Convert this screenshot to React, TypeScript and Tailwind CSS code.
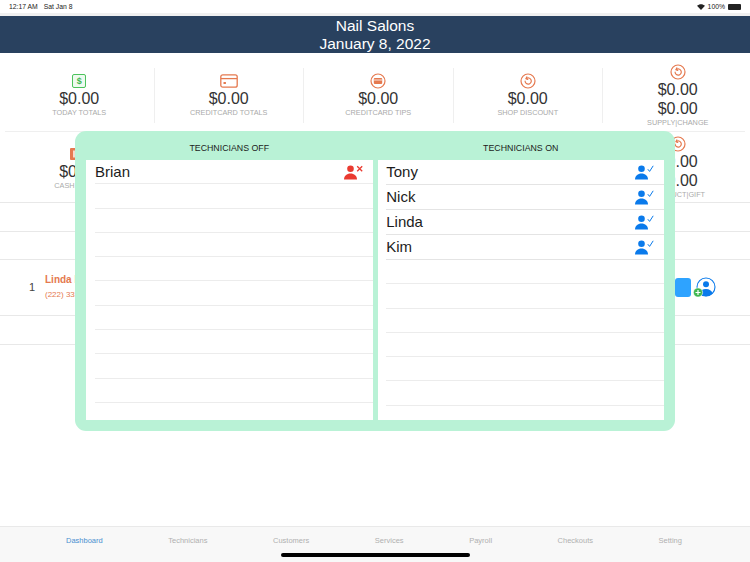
import React from "react";

const offRows = Array.from({ length: 10 });
const onRows = ["Tony", "Nick", "Linda", "Kim"];
const tabs = ["Dashboard", "Technicians", "Customers", "Services", "Payroll", "Checkouts", "Setting"];

function DollarIcon() {
  return (
    <div className="w-[14px] h-[14px] rounded-[2px] border-[1.5px] border-[#4cc35c] bg-[#eefaf0] flex items-center justify-center text-[9px] font-bold leading-none text-[#3fb650]">
      $
    </div>
  );
}

function CardIcon() {
  return (
    <svg width="18" height="14" viewBox="0 0 18 14" fill="none" stroke="#e5794f" strokeWidth="1.3">
      <rect x="0.8" y="0.8" width="16.4" height="12.4" rx="2" />
      <path d="M1 4.6h16" />
      <rect x="3.5" y="8" width="2.4" height="2" fill="#e5794f" stroke="none" />
    </svg>
  );
}

function CashIcon() {
  return (
    <svg width="18" height="12" viewBox="0 0 18 12">
      <rect width="18" height="12" rx="1" fill="#e5794f" />
      <rect x="3" y="2.500" width="12" height="7" fill="#f8d9cc" />
    </svg>
  );
}

function CardCircleIcon() {
  return (
    <svg width="16" height="16" viewBox="0 0 16 16" fill="none">
      <circle cx="8" cy="8" r="7" stroke="#e5794f" strokeWidth="1.2" />
      <rect x="3.8" y="5" width="8.4" height="6" rx="1" fill="#e5794f" />
      <path d="M3.8 7h8.4" stroke="#fff" strokeWidth="0.8" />
    </svg>
  );
}

function ReturnIcon() {
  return (
    <svg width="16" height="16" viewBox="0 0 16 16" fill="none" stroke="#e5794f" strokeWidth="1.2">
      <circle cx="8" cy="8" r="7" />
      <path d="M6.3 5.6a3.1 3.1 0 1 1-1.2 2.6" strokeLinecap="round" />
      <path d="M6.9 3.9 5.9 5.7l1.9.7" strokeLinecap="round" strokeLinejoin="round" />
    </svg>
  );
}

function PersonOn() {
  return (
    <svg width="19" height="15" viewBox="0 0 19 15" fill="none">
      <circle cx="6.500" cy="3.800" r="3.300" fill="#0a7aeb" />
      <path d="M0 14.600c0-3.600 2.800-6 6.500-6s6.500 2.400 6.500 6z" fill="#0a7aeb" />
      <path d="M12.800 4.200 14.600 6.400 18.200 0.800" stroke="#0a7aeb" strokeWidth="1" />
    </svg>
  );
}

function PersonOff() {
  return (
    <svg width="19" height="15" viewBox="0 0 19 15" fill="none">
      <circle cx="6.500" cy="3.800" r="3.300" fill="#ea3a30" />
      <path d="M0 14.600c0-3.600 2.800-6 6.500-6s6.500 2.400 6.500 6z" fill="#ea3a30" />
      <path d="M13.200 1.200l5 5M18.200 1.200l-5 5" stroke="#ea3a30" strokeWidth="1.300" />
    </svg>
  );
}

function AddUserIcon() {
  return (
    <svg width="23" height="21" viewBox="0 0 23 21" fill="none">
      <circle cx="13" cy="10" r="9" stroke="#0a7aeb" strokeWidth="1.100" />
      <circle cx="13" cy="7.200" r="3" fill="#0a7aeb" />
      <path d="M6.500 16.500c.6-3 3.200-4.600 6.500-4.600s5.900 1.600 6.500 4.600c-3.500 3.500-9.500 3.500-13 0z" fill="#0a7aeb" />
      <circle cx="5" cy="15.500" r="4.600" fill="#3fb650" stroke="#fff" strokeWidth="0.600" />
      <path d="M5 13v5M2.500 15.500h5" stroke="#fff" strokeWidth="1.200" />
    </svg>
  );
}

function Stat({ icon, values, label, last }: { icon: React.ReactNode; values: string[]; label: string; last?: boolean }) {
  return (
    <div className={`h-[55px] flex flex-col items-center justify-center ${last ? "" : "border-r border-[#efefef]"}`}>
      <div className="h-4 flex items-center justify-center">{icon}</div>
      {values.map((v, i) => (
        <div key={i} className="text-[16px] leading-[19px] text-[#333]">
          {v}
        </div>
      ))}
      <div className="text-[7.300px] leading-[10px] text-[#aaa] whitespace-nowrap">{label}</div>
    </div>
  );
}

export default function App() {
  return (
    <div
      className="relative w-[750px] h-[562px] overflow-hidden bg-white flex flex-col"
      style={{ fontFamily: '"Liberation Sans", Arial, sans-serif' }}
    >
      {/* Status bar */}
      <div className="h-[13px] flex items-center justify-between pl-[9px] pr-[9px] pt-[1px] text-[6.800px] font-medium text-[#222] shrink-0">
        <div className="flex gap-[6px]">
          <span>12:17 AM</span>
          <span>Sat Jan 8</span>
        </div>
        <div className="flex items-center gap-[3px]">
          <svg width="8" height="6" viewBox="0 0 8 6" fill="#222">
            <path d="M4 6 0 1.800C2.300-.4 5.700-.4 8 1.800z" />
          </svg>
          <span>100%</span>
          <div className="w-[13px] h-[6px] bg-[#222] rounded-[1px]" />
        </div>
      </div>
      <div className="h-[3px] bg-[#f0f0f0] shrink-0" />

      {/* Header */}
      <div className="h-[37px] bg-[#29415f] text-white text-center text-[15.500px] leading-[18px] pt-[1px] shrink-0">
        <div>Nail Salons</div>
        <div>January 8, 2022</div>
      </div>

      {/* Stats */}
      <div className="h-[79px] shrink-0 mx-[5px] border-b border-[#efefef] pt-[7px] grid grid-cols-[repeat(5,149.500px)] items-center">
        <Stat icon={<DollarIcon />} values={["$0.00"]} label="TODAY TOTALS" />
        <Stat icon={<CardIcon />} values={["$0.00"]} label="CREDITCARD TOTALS" />
        <Stat icon={<CardCircleIcon />} values={["$0.00"]} label="CREDITCARD TIPS" />
        <Stat icon={<ReturnIcon />} values={["$0.00"]} label="SHOP DISCOUNT" />
        <Stat icon={<ReturnIcon />} values={["$0.00", "$0.00"]} label="SUPPLY|CHANGE" last />
      </div>
      <div className="h-[71px] shrink-0 border-b border-[#e8e8e8] pl-[5px] pt-[2px] grid grid-cols-[repeat(5,149.500px)] items-center">
        <Stat icon={<CashIcon />} values={["$0.00"]} label="CASH TOTALS" />
        <div />
        <div />
        <div />
        <Stat icon={<ReturnIcon />} values={["$0.00", "$0.00"]} label="PRODUCT|GIFT" last />
      </div>

      {/* List */}
      <div className="h-[29px] shrink-0 border-b border-[#e8e8e8]" />
      <div className="h-[28px] shrink-0 border-b border-[#e8e8e8]" />
      <div className="h-[56px] shrink-0 border-b border-[#e8e8e8] flex items-center">
        <div className="w-[45px] pl-[29px] text-[11px] text-[#444]">1</div>
        <div className="flex-1">
          <div className="text-[10px] font-bold text-[#e5794f] leading-[14px]">Linda N</div>
          <div className="text-[8px] text-[#e5794f] leading-[16px]">(222) 333-4444</div>
        </div>
        <div className="flex items-center gap-[2px] pr-[34px]">
          <div className="w-[16px] h-[19px] rounded-[3px] bg-[#2ea3ff]" />
          <AddUserIcon />
        </div>
      </div>
      <div className="h-[29px] shrink-0 border-b border-[#e8e8e8]" />

      {/* Tab bar */}
      <div className="mt-auto h-[36px] bg-[#f8f8f8] border-t border-[#e9e9e9] flex justify-between pl-[66px] pr-[68px] pt-[9px] text-[7.500px] leading-[10px] text-[#b0b0b0] shrink-0">
        {tabs.map((t, i) => (
          <span key={t} className={i === 0 ? "text-[#4a90d0]" : ""}>
            {t}
          </span>
        ))}
      </div>
      <div className="absolute left-[281px] top-[553px] w-[189px] h-[3.500px] rounded-full bg-black" />

      {/* Technicians popup */}
      <div className="absolute left-[75px] top-[131px] w-[600px] h-[300px] rounded-[11px] bg-[#b9f2d6] px-[11px] text-[#1c1c1c]">
        <div className="h-[29px] flex gap-[5px] items-center text-center text-[8.800px]">
          <div className="flex-1 pt-[6px]">TECHNICIANS OFF</div>
          <div className="flex-1 pt-[6px]">TECHNICIANS ON</div>
        </div>
        <div className="h-[260px] flex gap-[5px]">
          <div className="flex-1 bg-white pl-[9px] overflow-hidden">
            {offRows.map((_, i) => (
              <div key={i} className="h-[24.300px] border-b border-[#ececec] flex items-center justify-between pr-[10px] pt-[1px] text-[15px]">
                {i === 0 && (
                  <>
                    <span>Brian</span>
                    <PersonOff />
                  </>
                )}
              </div>
            ))}
          </div>
          <div className="flex-1 bg-white pl-[8.500px] overflow-hidden">
            {onRows.map((name) => (
              <div key={name} className="h-[25px] border-b border-[#e4e4e4] flex items-center justify-between pr-[10px] pt-[1px] text-[15px]">
                <span>{name}</span>
                <PersonOn />
              </div>
            ))}
            {offRows.slice(0, 6).map((_, i) => (
              <div key={i} className="h-[24.300px] border-b border-[#ececec]" />
            ))}
          </div>
        </div>
      </div>
    </div>
  );
}
